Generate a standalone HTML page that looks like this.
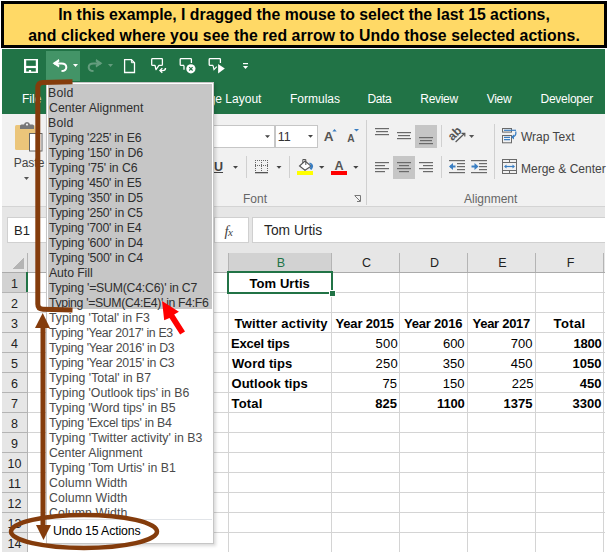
<!DOCTYPE html>
<html><head><meta charset="utf-8">
<style>
*{box-sizing:border-box}
html,body{margin:0;padding:0}
body{width:607px;height:553px;position:relative;overflow:hidden;background:#fff;font-family:"Liberation Sans",sans-serif}
.a{position:absolute;white-space:nowrap}
.t{position:absolute;white-space:nowrap;line-height:1}
#banner{left:1px;top:1px;width:606px;height:47px;border:3px solid #000;background:#FFD966;position:absolute}
.bl{position:absolute;left:0;width:600px;text-align:center;font-weight:bold;font-size:15.8px;color:#000;line-height:1}
.tab{position:absolute;top:92.8px;font-size:12px;color:#fff;line-height:1}
.cell{position:absolute;font-size:13px;color:#000;line-height:1;white-space:nowrap}
.b{font-weight:bold}
.sel .it{color:#2e2e2e}
.rh{position:absolute;left:2px;width:25px;text-align:center;font-size:12.5px;color:#222;line-height:1}
.ch{position:absolute;top:257px;text-align:center;font-size:12.5px;color:#222;line-height:1;padding-left:3px}
.it{position:absolute;left:48.6px;font-size:12.3px;color:#4a4a4a;line-height:1;white-space:nowrap}
</style></head>
<body>
<!-- banner -->
<div id="banner">
  <div class="bl" style="top:3px">In this example, I dragged the mouse to select the last 15 actions,</div>
  <div class="bl" style="top:23.6px;letter-spacing:0.08px">and clicked where you see the red arrow to Undo those selected actions.</div>
</div>

<!-- green title/tab bar -->
<div class="a" style="left:2px;top:49px;width:603px;height:65px;background:#217346"></div>
<div class="a" style="left:46px;top:51px;width:34px;height:30px;background:#439467"></div>

<!-- ribbon body -->
<div class="a" style="left:2px;top:114px;width:603px;height:92px;background:#F1F1F1"></div>
<div class="a" style="left:2px;top:206px;width:603px;height:1px;background:#D4D4D4"></div>
<!-- formula strip -->
<div class="a" style="left:2px;top:207px;width:603px;height:46px;background:#E6E6E6"></div>


<!-- QAT + ribbon icons -->
<svg class="a" style="left:0;top:0" width="607" height="553">
  <!-- save -->
  <g fill="#fff">
    <rect x="24" y="59" width="14" height="1.4"/>
    <rect x="24" y="59" width="2.2" height="14"/>
    <rect x="35.8" y="59" width="2.2" height="14"/>
    <rect x="24" y="71.5" width="14" height="1.5"/>
    <rect x="24" y="65.9" width="14" height="2.2"/>
    <rect x="28.9" y="70" width="2.2" height="2"/>
  </g>
  <!-- undo -->
  <path d="M54,63.5 H61.5 C64.8,63.5 66.3,65.3 66.3,67.2 C66.3,69.3 64.6,71 61.5,71" fill="none" stroke="#fff" stroke-width="2"/>
  <polygon points="52.6,63.3 58.9,59 59.4,61.2 57.4,63.3 59.4,65.4 58.9,67.5" fill="#fff"/>
  <polygon points="73,64 78,64 75.5,67" fill="#fff"/>
  <!-- redo (disabled) -->
  <g opacity="0.3">
  <path d="M101,63.5 H93.5 C90.2,63.5 88.7,65.3 88.7,67.2 C88.7,69.3 90.4,71 93.5,71" fill="none" stroke="#fff" stroke-width="2"/>
  <polygon points="102.4,63.3 96.1,59 95.6,61.2 97.6,63.3 95.6,65.4 96.1,67.5" fill="#fff"/>
  <polygon points="108,64 113,64 110.5,67" fill="#fff"/>
  </g>
  <!-- new doc -->
  <path d="M124.6,59.6 H131.4 L134.5,62.7 V72.5 H124.6 Z" fill="none" stroke="#fff" stroke-width="1.3"/>
  <path d="M131.4,59.6 V62.7 H134.5" fill="none" stroke="#fff" stroke-width="1"/>
  <!-- reply comment -->
  <path d="M155,65.4 H152.6 Q151.7,65.4 151.7,64.4 V59.4 Q151.7,58.6 152.6,58.6 H161.7 Q162.4,58.6 162.4,59.4 V64.4 Q162.4,65.4 161.5,65.4 H159 L156,69.6 Z" fill="none" stroke="#fff" stroke-width="1.3" stroke-linejoin="round"/>
  <path d="M165.5,68 Q165.5,70.6 162.5,70.6 H160.5" fill="none" stroke="#fff" stroke-width="1.4"/>
  <path d="M162.3,68.3 L160,70.6 L162.3,72.8" fill="none" stroke="#fff" stroke-width="1.4"/>
  <!-- delete comment -->
  <path d="M184,65.4 H181.1 Q180.2,65.4 180.2,64.4 V59.4 Q180.2,58.6 181.1,58.6 H190.7 Q191.4,58.6 191.4,59.4 V63" fill="none" stroke="#fff" stroke-width="1.3"/>
  <path d="M184,65.4 V69.8" fill="none" stroke="#fff" stroke-width="1.3"/>
  <circle cx="190.9" cy="68.8" r="4.6" fill="#fff"/>
  <path d="M189.2,67.1 L192.6,70.5 M192.6,67.1 L189.2,70.5" stroke="#217346" stroke-width="1.2"/>
  <!-- next comment -->
  <path d="M213,65.4 H210.1 Q209.2,65.4 209.2,64.4 V59.4 Q209.2,58.6 210.1,58.6 H219.7 Q220.4,58.6 220.4,59.4 V63" fill="none" stroke="#fff" stroke-width="1.3"/>
  <path d="M213,65.4 L214,69.6 L216.8,66.6" fill="none" stroke="#fff" stroke-width="1.2"/>
  <polygon points="218.1,64.1 218.1,73.5 224.8,68.6" fill="#fff"/>
  <!-- customize -->
  <rect x="243" y="63" width="5" height="1.2" fill="#fff"/>
  <polygon points="242.9,65.9 248.1,65.9 245.5,69" fill="#fff"/>

  <!-- paste clipboard -->
  <rect x="15" y="125" width="20" height="25" rx="1.5" fill="#EBC57A"/>
  <path d="M20,129 V126 Q20,124.5 21.5,124.5 H24 Q24.3,122 27,122 Q29.7,122 30,124.5 H32.5 Q34,124.5 34,126 V129 Z" fill="#777"/>
  <circle cx="27" cy="124.6" r="1.1" fill="#F1F1F1"/>
  <rect x="29.5" y="133.5" width="12.5" height="17.5" fill="#fff" stroke="#666" stroke-width="1"/>
  <polygon points="24,177 29,177 26.5,180" fill="#555"/>

  <!-- font name/size boxes -->
  <rect x="200.5" y="125.5" width="74" height="22" fill="#fff" stroke="#C6C6C6"/>
  <rect x="275.5" y="125.5" width="42" height="22" fill="#fff" stroke="#C6C6C6"/>
  <polygon points="265,135.3 270,135.3 267.5,138" fill="#444"/>
  <polygon points="308,135 313,135 310.5,137.8" fill="#444"/>
  <!-- grow/shrink -->
  <polygon points="332.3,131.5 336.7,131.5 334.5,129" fill="#3A7EC2"/>
  <polygon points="354,129 359,129 356.5,131.5" fill="#3A7EC2"/>
  <!-- row 2 -->
  <polygon points="233,166 238,166 235.5,168.8" fill="#444"/>
  <rect x="246" y="156" width="1" height="22" fill="#D0D0D0"/>
  <g fill="#777">
   <rect x="255" y="160" width="13" height="1" fill="none"/>
  </g>
  <path d="M255.5,160 V171 M261.5,160 V171 M267.5,160 V171 M255,160.5 H268 M255,165.5 H268" stroke="#666" stroke-width="1" stroke-dasharray="1,1" fill="none"/>
  <rect x="255" y="172" width="13" height="1.3" fill="#555"/>
  <polygon points="276.5,166 281.5,166 279,168.8" fill="#444"/>
  <rect x="289" y="156" width="1" height="22" fill="#D0D0D0"/>
  <!-- fill bucket -->
  <path d="M305,161 L311,166.2 L305,170.3 L299.5,166 Z" fill="#fff" stroke="#555" stroke-width="1.1"/>
  <path d="M302.8,163 V159.5 H305.8 V165" fill="none" stroke="#555" stroke-width="1"/>
  <path d="M309.6,162.6 C313.8,163.6 314.2,167.6 311.2,170 L309.6,168.6 C311.2,166.6 311,164.6 309.4,163.8 Z" fill="#3A7EC2"/>
  <rect x="297" y="171" width="16" height="4" fill="#FFFF00"/>
  <polygon points="319,166 324.4,166 321.7,168.8" fill="#444"/>
  <rect x="331" y="171" width="16" height="4" fill="#FF0000"/>
  <polygon points="353.2,166 358.5,166 355.8,168.8" fill="#444"/>
  <!-- dialog launcher -->
  <path d="M354.5,195.5 H360.5 V201.5 M355,196 L360,201 M357,201.5 H360.5" fill="none" stroke="#777" stroke-width="1"/>
  <rect x="366" y="120" width="1" height="85" fill="#D0D0D0"/>

  <!-- alignment -->
  <rect x="415" y="125" width="22" height="23" fill="#C6C6C6"/>
  <rect x="393" y="156" width="22" height="23" fill="#C6C6C6"/>
  <g fill="#6A6A6A">
    <rect x="375" y="128" width="14" height="1.2"/><rect x="376" y="131" width="12" height="1.2"/><rect x="375" y="134" width="14" height="1.2"/>
    <rect x="397" y="132" width="14" height="1.2"/><rect x="398" y="135" width="12" height="1.2"/><rect x="397" y="138" width="14" height="1.2"/>
    <rect x="419" y="137" width="14" height="1.2"/><rect x="420" y="140" width="12" height="1.2"/><rect x="419" y="143" width="14" height="1.2"/>
    <rect x="375" y="162" width="14" height="1.2"/><rect x="375" y="165" width="10" height="1.2"/><rect x="375" y="168" width="14" height="1.2"/><rect x="375" y="171" width="10" height="1.2"/>
    <rect x="397" y="162" width="14" height="1.2"/><rect x="399" y="165" width="10" height="1.2"/><rect x="397" y="168" width="14" height="1.2"/><rect x="399" y="171" width="10" height="1.2"/>
    <rect x="419" y="162" width="14" height="1.2"/><rect x="423" y="165" width="10" height="1.2"/><rect x="419" y="168" width="14" height="1.2"/><rect x="423" y="171" width="10" height="1.2"/>
    <rect x="449" y="160" width="16" height="1.2"/><rect x="457" y="163" width="8" height="1.2"/><rect x="457" y="166" width="8" height="1.2"/><rect x="457" y="169" width="8" height="1.2"/><rect x="449" y="172" width="16" height="1.2"/>
    <rect x="471" y="160" width="16" height="1.2"/><rect x="479" y="163" width="8" height="1.2"/><rect x="479" y="166" width="8" height="1.2"/><rect x="479" y="169" width="8" height="1.2"/><rect x="471" y="172" width="16" height="1.2"/>
  </g>
  <rect x="441" y="125" width="1" height="22" fill="#D0D0D0"/>
  <rect x="441" y="156" width="1" height="22" fill="#D0D0D0"/>
  <!-- orientation -->
  <text x="0" y="0" transform="translate(452.5,141.3) rotate(-45)" font-family="Liberation Sans" font-size="12" font-weight="bold" fill="#555">ab</text>
  <path d="M455.6,142 L464.5,133.5" stroke="#555" stroke-width="1.2"/>
  <path d="M461.5,133.3 H464.8 V136.6" fill="none" stroke="#555" stroke-width="1.2"/>
  <polygon points="469,135 474.2,135 471.6,138" fill="#555"/>
  <!-- indent arrows -->
  <path d="M455.5,166.5 H450" stroke="#3A7EC2" stroke-width="2"/>
  <polygon points="449,166.5 453,163 453,170" fill="#3A7EC2"/>
  <path d="M471.5,166.5 H477" stroke="#3A7EC2" stroke-width="2"/>
  <polygon points="478.5,166.5 474.5,163 474.5,170" fill="#3A7EC2"/>
  <rect x="494" y="124" width="1" height="55" fill="#D0D0D0"/>
  <!-- wrap text icon -->
  <rect x="502.5" y="128.5" width="9" height="3.6" fill="none" stroke="#6A6A6A" stroke-width="1"/>
  <rect x="502.5" y="135.5" width="9" height="7.3" fill="none" stroke="#6A6A6A" stroke-width="1"/>
  <path d="M504,130.3 H516" stroke="#3A7EC2" stroke-width="1.2"/>
  <path d="M504,137.3 H510 M504,139.6 H510" stroke="#3A7EC2" stroke-width="1.2"/>
  <path d="M515.8,131.5 Q516.5,136.5 512,137" fill="none" stroke="#3A7EC2" stroke-width="1.3"/>
  <polygon points="511,137 514,134.5 514,139.5" fill="#3A7EC2"/>
  <!-- merge icon -->
  <rect x="502.5" y="159.5" width="14" height="14" fill="none" stroke="#6A6A6A" stroke-width="1"/>
  <path d="M502.5,162.5 H516.5 M502.5,170.5 H516.5 M509.5,159.5 V162.5 M509.5,170.5 V173.5" stroke="#6A6A6A" stroke-width="1" fill="none"/>
  <path d="M505,166.5 H514" stroke="#3A7EC2" stroke-width="1.2"/>
  <polygon points="504,166.5 506.5,164.5 506.5,168.5" fill="#3A7EC2"/>
  <polygon points="515,166.5 512.5,164.5 512.5,168.5" fill="#3A7EC2"/>
</svg>
<div class="t" style="left:13.7px;top:157px;font-size:12px;color:#444">Paste</div>
<div class="t" style="left:214px;top:160.5px;font-size:12.5px;color:#444;font-weight:bold;text-decoration:underline">U</div>
<div class="t" style="left:277.7px;top:131.2px;font-size:12.5px;color:#333">11</div>
<div class="t" style="left:323.8px;top:129.8px;font-size:13.6px;font-weight:bold;color:#555">A</div>
<div class="t" style="left:347.2px;top:133.8px;font-size:10.2px;font-weight:bold;color:#555">A</div>
<div class="t" style="left:334.5px;top:160px;font-size:12.6px;font-weight:bold;color:#555">A</div>
<div class="t" style="left:243px;top:193px;font-size:12px;color:#666">Font</div>
<div class="t" style="left:464px;top:193px;font-size:12px;color:#666">Alignment</div>
<div class="t" style="left:521px;top:131px;font-size:12px;color:#444">Wrap Text</div>
<div class="t" style="left:521px;top:162.5px;font-size:12px;color:#444">Merge &amp; Center</div>

<!-- tabs -->
<div class="tab" style="left:22px">File</div>
<div class="tab" style="left:194px">Page Layout</div>
<div class="tab" style="left:290px">Formulas</div>
<div class="tab" style="left:367.5px;letter-spacing:-0.4px">Data</div>
<div class="tab" style="left:420.3px;letter-spacing:-0.3px">Review</div>
<div class="tab" style="left:486.7px;letter-spacing:-0.3px">View</div>
<div class="tab" style="left:540.5px;letter-spacing:-0.25px">Developer</div>

<!-- formula bar -->
<div class="a" style="left:7px;top:217px;width:42px;height:26px;background:#fff;border:1px solid #D0D0D0"></div>
<div class="t" style="left:14px;top:224px;font-size:13px;color:#222">B1</div>
<div class="a" style="left:214px;top:217px;width:35px;height:26px;background:#fff;border:1px solid #D0D0D0"></div>
<div class="t" style="left:224.5px;top:223.5px;font-size:14.5px;color:#444;font-family:'Liberation Serif',serif;font-style:italic">f<span style="font-size:11px;position:relative;left:-0.5px">x</span></div>
<div class="a" style="left:252px;top:217px;width:353px;height:26px;background:#fff;border:1px solid #D0D0D0;border-right:none"></div>
<div class="t" style="left:264px;top:223.5px;font-size:13.8px;color:#262626">Tom Urtis</div>

<!-- grid -->
<svg class="a" style="left:0;top:0" width="607" height="553" shape-rendering="crispEdges">
  <!-- header row bg -->
  <rect x="2" y="253" width="603" height="19" fill="#E6E6E6"/>
  <!-- row header bg -->
  <rect x="2" y="272" width="25" height="280" fill="#E6E6E6"/>
  <!-- selected col B header -->
  <rect x="228" y="253" width="103" height="19" fill="#D2D2D2"/>
  <!-- selected row 1 header -->
  <rect x="2" y="272" width="25" height="20" fill="#D2D2D2"/>
  <!-- cells bg -->
  <rect x="28" y="273" width="577" height="279" fill="#fff"/>
  <g fill="#D4D4D4">
    <rect x="27" y="253" width="1" height="299"/>
    <rect x="228" y="253" width="1" height="299"/>
    <rect x="331" y="253" width="1" height="299"/>
    <rect x="399" y="253" width="1" height="299"/>
    <rect x="467" y="253" width="1" height="299"/>
    <rect x="535" y="253" width="1" height="299"/>
    <rect x="603" y="253" width="1" height="299"/>
    <rect x="2" y="292" width="603" height="1"/>
    <rect x="2" y="312" width="603" height="1"/>
    <rect x="2" y="332" width="603" height="1"/>
    <rect x="2" y="352" width="603" height="1"/>
    <rect x="2" y="372" width="603" height="1"/>
    <rect x="2" y="392" width="603" height="1"/>
    <rect x="2" y="412" width="603" height="1"/>
    <rect x="2" y="432" width="603" height="1"/>
    <rect x="2" y="452" width="603" height="1"/>
    <rect x="2" y="472" width="603" height="1"/>
    <rect x="2" y="492" width="603" height="1"/>
    <rect x="2" y="512" width="603" height="1"/>
    <rect x="2" y="532" width="603" height="1"/>
  </g>
  <rect x="2" y="272" width="603" height="1" fill="#ABABAB"/>
  <g fill="#B4B4B4">
    <rect x="27" y="253" width="1" height="299"/>
    <rect x="2" y="292" width="25" height="1"/><rect x="2" y="312" width="25" height="1"/><rect x="2" y="332" width="25" height="1"/>
    <rect x="2" y="352" width="25" height="1"/><rect x="2" y="372" width="25" height="1"/><rect x="2" y="392" width="25" height="1"/>
    <rect x="2" y="412" width="25" height="1"/><rect x="2" y="432" width="25" height="1"/><rect x="2" y="452" width="25" height="1"/>
    <rect x="2" y="472" width="25" height="1"/><rect x="2" y="492" width="25" height="1"/><rect x="2" y="512" width="25" height="1"/>
    <rect x="2" y="532" width="25" height="1"/>
    <rect x="331" y="253" width="1" height="19"/><rect x="399" y="253" width="1" height="19"/><rect x="467" y="253" width="1" height="19"/>
    <rect x="535" y="253" width="1" height="19"/><rect x="603" y="253" width="1" height="19"/><rect x="228" y="253" width="1" height="19"/>
  </g>
  <rect x="228" y="271" width="103" height="2" fill="#217346"/>
  <rect x="26" y="272" width="2" height="20" fill="#217346"/>
  <!-- select all triangle -->
  <polygon points="24,257 24,269 12,269" fill="#B4B4B4"/>
  <!-- selection B1 -->
  <rect x="228" y="272" width="104" height="21" fill="none" stroke="#217346" stroke-width="2"/>
  <rect x="329" y="290" width="6" height="6" fill="#217346" stroke="#fff" stroke-width="1"/>
</svg>

<!-- column headers -->
<div class="ch" style="left:228px;width:103px;color:#217346">B</div>
<div class="ch" style="left:331px;width:68px">C</div>
<div class="ch" style="left:399px;width:68px">D</div>
<div class="ch" style="left:467px;width:68px">E</div>
<div class="ch" style="left:535px;width:68px">F</div>
<!-- row headers -->
<div class="rh" style="top:277.8px;color:#262626">1</div>
<div class="rh" style="top:297.8px">2</div>
<div class="rh" style="top:317.8px">3</div>
<div class="rh" style="top:337.8px">4</div>
<div class="rh" style="top:357.8px">5</div>
<div class="rh" style="top:377.8px">6</div>
<div class="rh" style="top:397.8px">7</div>
<div class="rh" style="top:417.8px">8</div>
<div class="rh" style="top:437.8px">9</div>
<div class="rh" style="top:457.8px">10</div>
<div class="rh" style="top:477.8px">11</div>
<div class="rh" style="top:497.8px">12</div>
<div class="rh" style="top:517.8px">13</div>
<div class="rh" style="top:537.8px">14</div>

<!-- cells -->
<div class="cell b" id="c0" style="left:249.50px;top:276.7px;letter-spacing:0.075px">Tom Urtis</div>
<div class="cell b" id="c1" style="left:234.50px;top:316.7px;letter-spacing:0.200px">Twitter activity</div>
<div class="cell b" id="c2" style="left:335.50px;top:316.7px;letter-spacing:-0.175px">Year 2015</div>
<div class="cell b" id="c3" style="left:404.00px;top:316.7px;letter-spacing:-0.200px">Year 2016</div>
<div class="cell b" id="c4" style="left:472.50px;top:316.7px;letter-spacing:-0.275px">Year 2017</div>
<div class="cell b" id="c5" style="left:553.50px;top:316.7px;letter-spacing:0.400px">Total</div>
<div class="cell b" id="c6" style="left:231.00px;top:336.7px;letter-spacing:-0.222px">Excel tips</div>
<div class="cell b" id="c7" style="left:232.00px;top:356.7px;letter-spacing:0.075px">Word tips</div>
<div class="cell b" id="c8" style="left:231.50px;top:376.7px;letter-spacing:0.036px">Outlook tips</div>
<div class="cell b" id="c9" style="left:231.50px;top:396.7px;letter-spacing:0.200px">Total</div>
<div class="cell" id="c10" style="right:209.00px;top:336.7px;letter-spacing:0.300px">500</div>
<div class="cell" id="c11" style="right:209.00px;top:356.7px;letter-spacing:0.300px">250</div>
<div class="cell" id="c12" style="right:210.00px;top:376.7px;letter-spacing:0.000px">75</div>
<div class="cell b" id="c13" style="right:210.00px;top:396.7px;letter-spacing:0.000px">825</div>
<div class="cell" id="c14" style="right:142.50px;top:336.7px;letter-spacing:-0.100px">600</div>
<div class="cell" id="c15" style="right:142.50px;top:356.7px;letter-spacing:0.000px">350</div>
<div class="cell" id="c16" style="right:142.50px;top:376.7px;letter-spacing:0.000px">150</div>
<div class="cell b" id="c17" style="right:142.50px;top:396.7px;letter-spacing:-0.200px">1100</div>
<div class="cell" id="c18" style="right:74.50px;top:336.7px;letter-spacing:0.000px">700</div>
<div class="cell" id="c19" style="right:74.50px;top:356.7px;letter-spacing:0.000px">450</div>
<div class="cell" id="c20" style="right:73.50px;top:376.7px;letter-spacing:0.000px">225</div>
<div class="cell b" id="c21" style="right:74.50px;top:396.7px;letter-spacing:0.000px">1375</div>
<div class="cell b" id="c22" style="right:5.50px;top:336.7px;letter-spacing:-0.200px">1800</div>
<div class="cell b" id="c23" style="right:5.50px;top:356.7px;letter-spacing:0.000px">1050</div>
<div class="cell b" id="c24" style="right:5.50px;top:376.7px;letter-spacing:0.000px">450</div>
<div class="cell b" id="c25" style="right:5.50px;top:396.7px;letter-spacing:0.000px">3300</div>
<!-- dropdown -->
<div class="a" style="left:46px;top:82px;width:168px;height:462px;background:#fff;border:1px solid #C6C6C6;box-shadow:2px 2px 3px rgba(0,0,0,0.15)"></div>
<div class="a" style="left:48px;top:84px;width:164px;height:225px;background:#C6C6C6"></div>
<div class="a" style="left:48px;top:519px;width:164px;height:1px;background:#E1E4E8"></div>
<!-- items -->
<div class="sel">
<div class="it" style="left:48.00px;top:86.5px;letter-spacing:0.267px">Bold</div>
<div class="it" style="left:49.00px;top:101.5px;letter-spacing:0.000px">Center Alignment</div>
<div class="it" style="left:48.00px;top:116.5px;letter-spacing:0.267px">Bold</div>
<div class="it" style="left:49.00px;top:131.5px;letter-spacing:-0.224px">Typing '225' in E6</div>
<div class="it" style="left:49.00px;top:146.5px;letter-spacing:-0.176px">Typing '150' in D6</div>
<div class="it" style="left:49.00px;top:161.5px;letter-spacing:-0.100px">Typing '75' in C6</div>
<div class="it" style="left:49.00px;top:176.5px;letter-spacing:-0.224px">Typing '450' in E5</div>
<div class="it" style="left:49.00px;top:191.5px;letter-spacing:-0.176px">Typing '350' in D5</div>
<div class="it" style="left:49.00px;top:206.5px;letter-spacing:-0.188px">Typing '250' in C5</div>
<div class="it" style="left:49.00px;top:221.5px;letter-spacing:-0.224px">Typing '700' in E4</div>
<div class="it" style="left:49.00px;top:236.5px;letter-spacing:-0.176px">Typing '600' in D4</div>
<div class="it" style="left:49.00px;top:251.5px;letter-spacing:-0.176px">Typing '500' in C4</div>
<div class="it" style="left:49.00px;top:266.5px;letter-spacing:-0.100px">Auto Fill</div>
<div class="it" style="left:49.00px;top:281.5px;letter-spacing:-0.232px">Typing '=SUM(C4:C6)' in C7</div>
<div class="it" style="left:49.00px;top:296.5px;letter-spacing:-0.357px">Typing '=SUM(C4:E4)' in F4:F6</div>
</div>
<div class="it" style="left:49.00px;top:311.5px;letter-spacing:-0.011px">Typing 'Total' in F3</div>
<div class="it" style="left:49.00px;top:326.5px;letter-spacing:-0.313px">Typing 'Year 2017' in E3</div>
<div class="it" style="left:49.00px;top:341.5px;letter-spacing:-0.278px">Typing 'Year 2016' in D3</div>
<div class="it" style="left:49.00px;top:356.5px;letter-spacing:-0.278px">Typing 'Year 2015' in C3</div>
<div class="it" style="left:49.00px;top:371.5px;letter-spacing:0.021px">Typing 'Total' in B7</div>
<div class="it" style="left:49.00px;top:386.5px;letter-spacing:-0.015px">Typing 'Outlook tips' in B6</div>
<div class="it" style="left:49.00px;top:401.5px;letter-spacing:-0.043px">Typing 'Word tips' in B5</div>
<div class="it" style="left:49.00px;top:416.5px;letter-spacing:-0.233px">Typing 'Excel tips' in B4</div>
<div class="it" style="left:49.00px;top:431.5px;letter-spacing:0.013px">Typing 'Twitter activity' in B3</div>
<div class="it" style="left:49.00px;top:446.5px;letter-spacing:-0.053px">Center Alignment</div>
<div class="it" style="left:49.00px;top:461.5px;letter-spacing:-0.043px">Typing 'Tom Urtis' in B1</div>
<div class="it" style="left:49.00px;top:476.5px;letter-spacing:0.109px">Column Width</div>
<div class="it" style="left:49.00px;top:491.5px;letter-spacing:0.109px">Column Width</div>
<div class="a" style="left:48px;top:505px;width:164px;height:14px;overflow:hidden"><div class="it" style="left:1.00px;top:1.5px;letter-spacing:0.109px">Column Width</div></div>
<div class="it" style="left:53px;top:525px;color:#000;letter-spacing:-0.14px">Undo 15 Actions</div>

<!-- annotations -->
<svg class="a" style="left:0;top:0" width="607" height="553">
  <path d="M72.5,81.8 L43,82.6 Q37.8,82.8 37.8,88 L37.8,304 Q37.8,309 43,309.2 L72.5,310" fill="none" stroke="#843C0C" stroke-width="5"/>
  <rect x="40.5" y="325" width="5" height="200" fill="#843C0C"/>
  <polygon points="42.7,313 35,328 50,328" fill="#843C0C"/>
  <polygon points="43.5,540 36,525 51,525" fill="#843C0C"/>
  <ellipse cx="84" cy="531.5" rx="73" ry="16.5" fill="none" stroke="#843C0C" stroke-width="4.5"/>
  <polygon points="162,301 164.2,320.2 169.5,318 180.1,334.5 185,331.6 174.2,314.5 178.9,311.7" fill="#FF0000"/>
</svg>
</body></html>
